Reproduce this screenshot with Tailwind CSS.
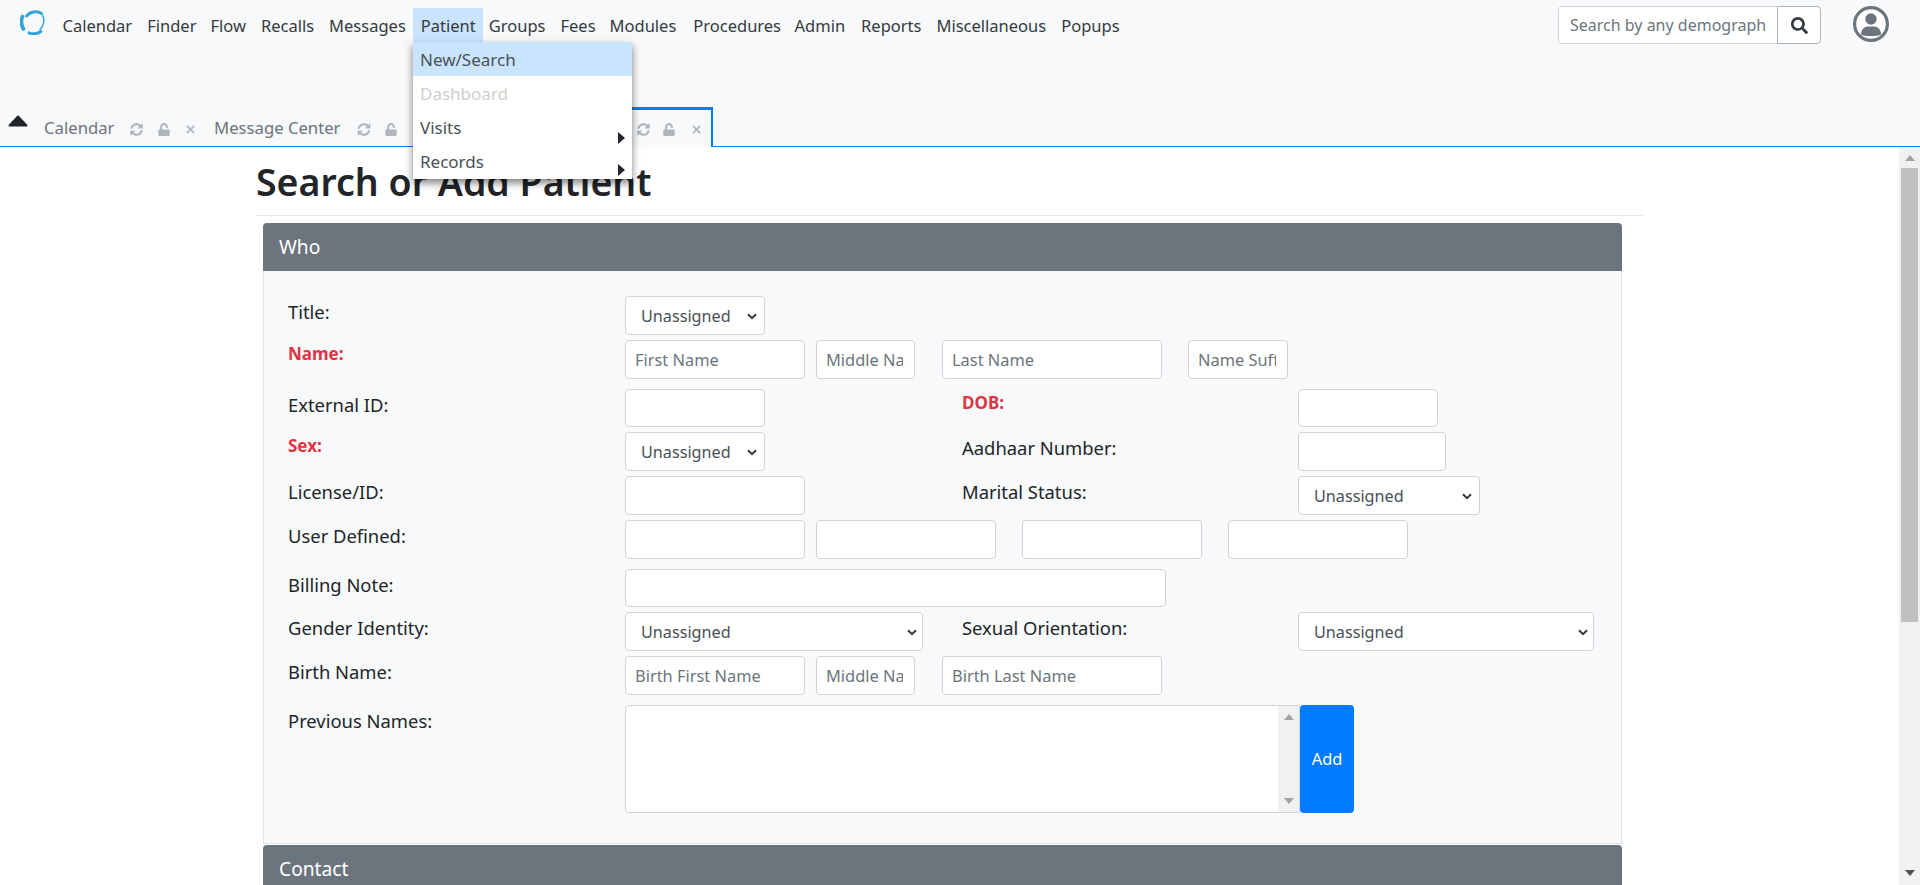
<!DOCTYPE html>
<html lang="en">
<head>
<meta charset="utf-8">
<title>Search or Add Patient</title>
<script src="https://cdn.jsdelivr.net/npm/@tailwindcss/browser@4"></script>
</head>
<body class="h-screen overflow-hidden bg-white text-[#212529] text-[18.4px] leading-[24px] font-['Noto_Sans',sans-serif]">
<svg class="hidden">
  <symbol id="i-sync" viewBox="0 0 512 512"><path fill="currentColor" d="M370.72 133.28C339.458 104.008 298.888 87.962 255.848 88c-77.458.068-144.328 53.178-162.791 126.85-1.344 5.363-6.122 9.15-11.651 9.15H24.103c-7.498 0-13.194-6.807-11.807-14.176C33.933 94.924 134.813 8 256 8c66.448 0 126.791 26.136 171.315 68.685L463.03 40.97C478.149 25.851 504 36.559 504 57.941V192c0 13.255-10.745 24-24 24H345.941c-21.382 0-32.09-25.851-16.971-40.971l41.75-41.749zM32 296h134.059c21.382 0 32.09 25.851 16.971 40.971l-41.75 41.75c31.262 29.273 71.835 45.319 114.876 45.28 77.418-.07 144.315-53.144 162.787-126.849 1.344-5.363 6.122-9.15 11.651-9.15h57.304c7.498 0 13.194 6.807 11.807 14.176C478.067 417.076 377.187 504 256 504c-66.448 0-126.791-26.136-171.315-68.685L48.97 471.03C33.851 486.149 8 475.441 8 454.059V320c0-13.255 10.745-24 24-24z"/></symbol>
  <symbol id="i-lock" viewBox="0 0 448 512"><path fill="currentColor" d="M400 256H152V152.9c0-39.6 31.7-72.5 71.3-72.9 40-.4 72.7 32.1 72.7 72v16c0 13.3 10.7 24 24 24h32c13.3 0 24-10.7 24-24v-16C376 68 307.5-.3 223.5 0 139.5.3 72 69.5 72 153.5V256H48c-26.5 0-48 21.5-48 48v160c0 26.5 21.5 48 48 48h352c26.5 0 48-21.5 48-48V304c0-26.5-21.5-48-48-48z"/></symbol>
  <symbol id="i-x" viewBox="0 0 10 10"><path d="M1 1L9 9M9 1L1 9" stroke="currentColor" stroke-width="1.8" fill="none"/></symbol>
  <symbol id="i-chev" viewBox="0 0 10 7"><path d="M1 1.200L5 5.200L9 1.200" stroke="currentColor" stroke-width="2" fill="none"/></symbol>
</svg>

<!-- top nav -->
<header class="relative h-[147px] bg-[#f8f9fa] border-b border-[#007bff] text-[16.5px]">
  <div class="flex items-start">
    <svg class="ml-[20px] mt-[10px] w-[25px] h-[25px] shrink-0" viewBox="0 0 25 25" fill="none" stroke="#35a2d9" stroke-linecap="round">
      <path d="M6.500 6C10 1.500 17 .5 21.500 3.500" stroke-width="3"/>
      <path d="M22.800 5.500C24.800 10 23.800 16 20 19.500" stroke-width="1.500"/>
      <path d="M21 21.500C17 24 12 24 9 22.800" stroke-width="3"/>
      <path d="M3.500 19C1 15 1 9.500 2.500 6.500" stroke-width="3.600"/>
    </svg>
    <nav class="ml-[10px] mt-[8px] flex text-[#343a40]">
      <a class="px-[7.5px] h-[34px] pt-[2px] leading-[32px]">Calendar</a>
      <a class="pl-[7.5px] pr-[6.5px] h-[34px] pt-[2px] leading-[32px]">Finder</a>
      <a class="px-[7.5px] h-[34px] pt-[2px] leading-[32px]">Flow</a>
      <a class="px-[7.5px] h-[34px] pt-[2px] leading-[32px]">Recalls</a>
      <a class="px-[7.5px] h-[34px] pt-[2px] leading-[32px]">Messages</a>
      <a class="px-[7.5px] h-[34px] pt-[2px] leading-[32px] bg-[#cbe4fd]">Patient</a>
      <a class="pl-[5.5px] pr-[7.5px] h-[34px] pt-[2px] leading-[32px]">Groups</a>
      <a class="px-[7.5px] h-[34px] pt-[2px] leading-[32px]">Fees</a>
      <a class="pl-[6.5px] pr-[7.5px] h-[34px] pt-[2px] leading-[32px]">Modules</a>
      <a class="pl-[9.5px] pr-[7.5px] h-[34px] pt-[2px] leading-[32px]">Procedures</a>
      <a class="pl-[6px] pr-[7.5px] h-[34px] pt-[2px] leading-[32px]">Admin</a>
      <a class="pl-[8.5px] pr-[7.5px] h-[34px] pt-[2px] leading-[32px]">Reports</a>
      <a class="px-[7.5px] h-[34px] pt-[2px] leading-[32px]">Miscellaneous</a>
      <a class="px-[7.5px] h-[34px] pt-[2px] leading-[32px]">Popups</a>
    </nav>
    <div class="ml-auto mt-[6px] flex">
      <input class="w-[220px] h-[38px] pl-[11px] pr-[10px] text-[16px] bg-white border border-[#ced4da] rounded-l-[4px] placeholder:text-[#6c757d]" placeholder="Search by any demographics">
      <button class="w-[44px] h-[38px] -ml-px flex items-center justify-center bg-white border border-[#adb5bd] rounded-r-[4px] text-[#343a40]">
        <svg class="w-[17px] h-[17px]" viewBox="0 0 512 512"><path fill="currentColor" d="M505 442.7L405.3 343c-4.5-4.5-10.6-7-17-7H372c27.6-35.3 44-79.7 44-128C416 93.1 322.9 0 208 0S0 93.1 0 208s93.1 208 208 208c48.3 0 92.7-16.4 128-44v16.3c0 6.4 2.5 12.5 7 17l99.7 99.7c9.4 9.4 24.6 9.4 33.9 0l28.3-28.3c9.4-9.4 9.4-24.6.1-34zM208 336c-70.7 0-128-57.2-128-128 0-70.7 57.2-128 128-128 70.7 0 128 57.2 128 128 0 70.7-57.2 128-128 128z"/></svg>
      </button>
      <svg class="ml-[32px] mr-[31px] w-[36px] h-[36px]" viewBox="0 0 36 36">
        <circle cx="18" cy="18" r="16.4" fill="#fff" stroke="#6c757d" stroke-width="3.2"/>
        <circle cx="18" cy="13" r="5.7" fill="#6c757d"/>
        <path d="M8 28.500C8 23 12 20.500 15 20.500H21C24 20.500 28 23 28 28.500C25.500 30.500 10.500 30.500 8 28.500Z" fill="#6c757d"/>
      </svg>
    </div>
  </div>

  <!-- tabs -->
  <div class="absolute left-0 bottom-[-1px] h-[40px] w-full flex items-start">
    <svg class="ml-[8px] mt-[8px] w-[20px] h-[12px] shrink-0" viewBox="0 0 20 12"><path d="M10 1.500L18.500 10.500H1.500Z" fill="#212529" stroke="#212529" stroke-width="2" stroke-linejoin="round"/></svg>
    <div class="ml-[16px] mt-[9px] flex items-center h-[24px] text-[#6c757d] text-[16.7px]">
      <span class="w-[69px]">Calendar</span>
      <svg class="ml-[17px] mt-[2px] w-[13px] h-[13px] text-[#adb5bd]"><use href="#i-sync"/></svg>
      <svg class="ml-[15px] mt-[2px] w-[12px] h-[13px] text-[#adb5bd]"><use href="#i-lock"/></svg>
      <svg class="ml-[16px] mt-[2px] w-[9px] h-[9px] text-[#adb5bd]"><use href="#i-x"/></svg>
      <span class="ml-[19px] w-[127px]">Message Center</span>
      <svg class="ml-[16px] mt-[2px] w-[14px] h-[13px] text-[#adb5bd]"><use href="#i-sync"/></svg>
      <svg class="ml-[14px] mt-[2px] w-[12px] h-[13px] text-[#adb5bd]"><use href="#i-lock"/></svg>
    </div>
    <div class="absolute left-[420px] top-0 w-[293px] h-[40px] bg-[#f8f9fa] border-t-[3px] border-r-2 border-[#007bff] border-b-0">
      <div class="absolute left-[217px] top-[13px] flex items-center">
        <svg class="w-[13px] h-[13px] text-[#adb5bd]"><use href="#i-sync"/></svg>
        <svg class="ml-[13px] w-[12px] h-[13px] text-[#adb5bd]"><use href="#i-lock"/></svg>
        <svg class="ml-[17px] w-[9px] h-[9px] text-[#adb5bd]"><use href="#i-x"/></svg>
      </div>
    </div>
  </div>

  <!-- patient dropdown -->
  <div class="absolute z-10 left-[413px] top-[42px] w-[219px] h-[137px] bg-white text-[#495057] text-[17px] shadow-[0_4px_8px_rgba(0,0,0,0.5)]">
    <div class="pl-[7px] h-[34px] leading-[36px] bg-[#cbe4fd]">New/Search</div>
    <div class="pl-[7px] h-[34px] leading-[36px] text-[#cfcfcf]">Dashboard</div>
    <div class="relative pl-[7px] h-[34px] leading-[36px]">Visits
      <span class="absolute right-[7px] top-[22px] border-y-[6px] border-y-transparent border-l-[7px] border-l-[#212529]"></span>
    </div>
    <div class="relative pl-[7px] h-[34px] leading-[36px]">Records
      <span class="absolute right-[7px] top-[20px] border-y-[6px] border-y-transparent border-l-[7px] border-l-[#212529]"></span>
    </div>
  </div>
</header>

<!-- tab content -->
<div class="flex h-[738px]">
  <main class="flex-1 min-w-0 overflow-hidden">
    <div class="ml-[256px] w-[1387px] h-[69px] border-b border-[#e4e6e8]">
      <h1 class="pt-[10px] text-[37.5px] leading-[50px] font-semibold">Search or Add Patient</h1>
    </div>
    <div class="ml-[263px] w-[1359px] mt-[7px]">
      <div class="h-[48px] pl-[16px] flex items-center bg-[#6c757d] text-white text-[19.2px] rounded-t-[4px]">Who</div>
      <div class="h-[573px] pl-[24px] pt-[25px] bg-[#f8f9fa] border-x border-b border-[#e2e4e6]">

        <div class="flex items-start h-[39px]">
          <label class="w-[337px] pt-[4px] shrink-0">Title:</label>
          <div class="relative">
            <select class="appearance-none block w-[140px] h-[39px] pl-[15px] text-[16.2px] bg-white border border-[#ced4da] rounded-[4px] text-[#495057]"><option>Unassigned</option></select>
            <svg class="absolute right-[8px] top-[17px] w-[10px] h-[7px] text-[#343a40]"><use href="#i-chev"/></svg>
          </div>
        </div>

        <div class="flex items-start h-[39px] mt-[5px] text-[16.4px]">
          <label class="w-[337px] pt-[2px] shrink-0 text-[17px] font-bold text-[#dc3545]">Name:</label>
          <input class="w-[180px] h-[39px] pl-[9px] pr-[11px] bg-white border border-[#ced4da] rounded-[4px] placeholder:text-[#6c757d]" placeholder="First Name">
          <input class="ml-[11px] w-[99px] h-[39px] pl-[9px] pr-[11px] bg-white border border-[#ced4da] rounded-[4px] placeholder:text-[#6c757d]" placeholder="Middle Name">
          <input class="ml-[27px] w-[220px] h-[39px] pl-[9px] pr-[11px] bg-white border border-[#ced4da] rounded-[4px] placeholder:text-[#6c757d]" placeholder="Last Name">
          <input class="ml-[26px] w-[100px] h-[39px] pl-[9px] pr-[11px] bg-white border border-[#ced4da] rounded-[4px] placeholder:text-[#6c757d]" placeholder="Name Suffix">
        </div>

        <div class="flex items-start h-[38px] mt-[10px]">
          <label class="w-[337px] pt-[4px] shrink-0">External ID:</label>
          <input class="w-[140px] h-[38px] bg-white border border-[#ced4da] rounded-[4px]">
          <label class="ml-[197px] w-[336px] pt-[2px] text-[17px] font-bold text-[#dc3545]">DOB:</label>
          <input class="w-[140px] h-[38px] bg-white border border-[#ced4da] rounded-[4px]">
        </div>

        <div class="flex items-start h-[39px] mt-[5px]">
          <label class="w-[337px] pt-[2px] shrink-0 text-[17px] font-bold text-[#dc3545]">Sex:</label>
          <div class="relative">
            <select class="appearance-none block w-[140px] h-[39px] pl-[15px] text-[16.2px] bg-white border border-[#ced4da] rounded-[4px] text-[#495057]"><option>Unassigned</option></select>
            <svg class="absolute right-[8px] top-[17px] w-[10px] h-[7px] text-[#343a40]"><use href="#i-chev"/></svg>
          </div>
          <label class="ml-[197px] w-[336px] pt-[4px]">Aadhaar Number:</label>
          <input class="w-[148px] h-[39px] bg-white border border-[#ced4da] rounded-[4px]">
        </div>

        <div class="flex items-start h-[39px] mt-[5px]">
          <label class="w-[337px] pt-[4px] shrink-0">License/ID:</label>
          <input class="w-[180px] h-[39px] bg-white border border-[#ced4da] rounded-[4px]">
          <label class="ml-[157px] w-[336px] pt-[4px]">Marital Status:</label>
          <div class="relative">
            <select class="appearance-none block w-[182px] h-[39px] pl-[15px] text-[16.2px] bg-white border border-[#ced4da] rounded-[4px] text-[#495057]"><option>Unassigned</option></select>
            <svg class="absolute right-[8px] top-[17px] w-[10px] h-[7px] text-[#343a40]"><use href="#i-chev"/></svg>
          </div>
        </div>

        <div class="flex items-start h-[39px] mt-[5px]">
          <label class="w-[337px] pt-[4px] shrink-0">User Defined:</label>
          <input class="w-[180px] h-[39px] bg-white border border-[#ced4da] rounded-[4px]">
          <input class="ml-[11px] w-[180px] h-[39px] bg-white border border-[#ced4da] rounded-[4px]">
          <input class="ml-[26px] w-[180px] h-[39px] bg-white border border-[#ced4da] rounded-[4px]">
          <input class="ml-[26px] w-[180px] h-[39px] bg-white border border-[#ced4da] rounded-[4px]">
        </div>

        <div class="flex items-start h-[38px] mt-[10px]">
          <label class="w-[337px] pt-[4px] shrink-0">Billing Note:</label>
          <input class="w-[541px] h-[38px] bg-white border border-[#ced4da] rounded-[4px]">
        </div>

        <div class="flex items-start h-[39px] mt-[5px]">
          <label class="w-[337px] pt-[4px] shrink-0">Gender Identity:</label>
          <div class="relative">
            <select class="appearance-none block w-[298px] h-[39px] pl-[15px] text-[16.2px] bg-white border border-[#ced4da] rounded-[4px] text-[#495057]"><option>Unassigned</option></select>
            <svg class="absolute right-[6px] top-[17px] w-[10px] h-[7px] text-[#343a40]"><use href="#i-chev"/></svg>
          </div>
          <label class="ml-[39px] w-[336px] pt-[4px]">Sexual Orientation:</label>
          <div class="relative">
            <select class="appearance-none block w-[296px] h-[39px] pl-[15px] text-[16.2px] bg-white border border-[#ced4da] rounded-[4px] text-[#495057]"><option>Unassigned</option></select>
            <svg class="absolute right-[6px] top-[17px] w-[10px] h-[7px] text-[#343a40]"><use href="#i-chev"/></svg>
          </div>
        </div>

        <div class="flex items-start h-[39px] mt-[5px] text-[16.4px]">
          <label class="w-[337px] pt-[4px] shrink-0 text-[18.4px]">Birth Name:</label>
          <input class="w-[180px] h-[39px] pl-[9px] pr-[11px] bg-white border border-[#ced4da] rounded-[4px] placeholder:text-[#6c757d]" placeholder="Birth First Name">
          <input class="ml-[11px] w-[99px] h-[39px] pl-[9px] pr-[11px] bg-white border border-[#ced4da] rounded-[4px] placeholder:text-[#6c757d]" placeholder="Middle Name">
          <input class="ml-[27px] w-[220px] h-[39px] pl-[9px] pr-[11px] bg-white border border-[#ced4da] rounded-[4px] placeholder:text-[#6c757d]" placeholder="Birth Last Name">
        </div>

        <div class="flex items-start h-[108px] mt-[10px]">
          <label class="w-[337px] pt-[4px] shrink-0">Previous Names:</label>
          <div class="w-[675px] h-[108px] flex bg-white border border-[#ced4da] rounded-l-[4px]">
            <textarea class="flex-1 resize-none"></textarea>
            <div class="w-[21px] bg-[#f1f1f1] flex flex-col items-center justify-between py-[8px]">
              <span class="border-x-[5px] border-x-transparent border-b-[6px] border-b-[#a3a3a3]"></span>
              <span class="border-x-[5px] border-x-transparent border-t-[6px] border-t-[#a3a3a3]"></span>
            </div>
          </div>
          <button class="w-[54px] h-[108px] bg-[#007bff] text-white text-[16.4px] rounded-[4px]">Add</button>
        </div>
      </div>
      <div class="h-[50px] mt-[1px] pl-[16px] pt-[12px] bg-[#6c757d] text-white text-[19.2px] rounded-t-[4px]">Contact</div>
    </div>
  </main>

  <!-- page scrollbar -->
  <div class="w-[21px] shrink-0 bg-[#f1f1f1] flex flex-col items-center">
    <span class="mt-[8px] border-x-[5px] border-x-transparent border-b-[6px] border-b-[#a3a3a3]"></span>
    <div class="mt-[7px] w-[17px] h-[454px] bg-[#c1c1c1]"></div>
    <span class="mt-auto mb-[9px] border-x-[5px] border-x-transparent border-t-[6px] border-t-[#505050]"></span>
  </div>
</div>
</body>
</html>
